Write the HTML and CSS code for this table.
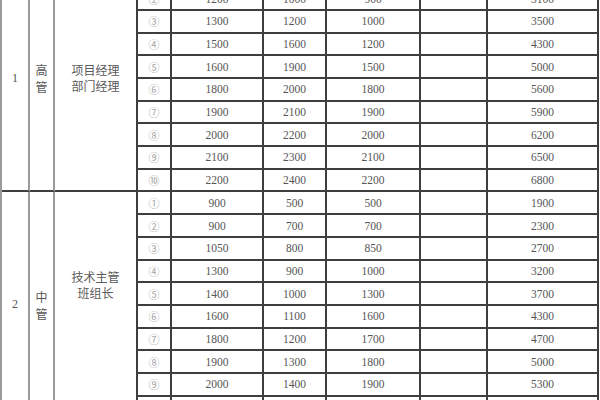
FILE: index.html
```html
<!DOCTYPE html>
<html lang="zh">
<head>
<meta charset="utf-8">
<title>薪资等级表</title>
<link rel="stylesheet" href="styles.css">
</head>
<body>
<div class="sheet">
  <div class="grp-no g1">1</div>
  <div class="grp-lv g1">高<br>管</div>
  <div class="grp-title g1">项目经理<br>部门经理</div>
  <div class="c">①</div><div class="n">1100</div><div class="n">1400</div><div class="n">800</div><div class="n"></div><div class="n">3300</div>
  <div class="c">②</div><div class="n">1200</div><div class="n">1000</div><div class="n">900</div><div class="n"></div><div class="n">3100</div>
  <div class="c">③</div><div class="n">1300</div><div class="n">1200</div><div class="n">1000</div><div class="n"></div><div class="n">3500</div>
  <div class="c">④</div><div class="n">1500</div><div class="n">1600</div><div class="n">1200</div><div class="n"></div><div class="n">4300</div>
  <div class="c">⑤</div><div class="n">1600</div><div class="n">1900</div><div class="n">1500</div><div class="n"></div><div class="n">5000</div>
  <div class="c">⑥</div><div class="n">1800</div><div class="n">2000</div><div class="n">1800</div><div class="n"></div><div class="n">5600</div>
  <div class="c">⑦</div><div class="n">1900</div><div class="n">2100</div><div class="n">1900</div><div class="n"></div><div class="n">5900</div>
  <div class="c">⑧</div><div class="n">2000</div><div class="n">2200</div><div class="n">2000</div><div class="n"></div><div class="n">6200</div>
  <div class="c">⑨</div><div class="n">2100</div><div class="n">2300</div><div class="n">2100</div><div class="n"></div><div class="n">6500</div>
  <div class="c">⑩</div><div class="n">2200</div><div class="n">2400</div><div class="n">2200</div><div class="n"></div><div class="n">6800</div>

  <div class="grp-no g2">2</div>
  <div class="grp-lv g2">中<br>管</div>
  <div class="grp-title g2 raised">技术主管<br>班组长</div>
  <div class="c">①</div><div class="n">900</div><div class="n">500</div><div class="n">500</div><div class="n"></div><div class="n">1900</div>
  <div class="c">②</div><div class="n">900</div><div class="n">700</div><div class="n">700</div><div class="n"></div><div class="n">2300</div>
  <div class="c">③</div><div class="n">1050</div><div class="n">800</div><div class="n">850</div><div class="n"></div><div class="n">2700</div>
  <div class="c">④</div><div class="n">1300</div><div class="n">900</div><div class="n">1000</div><div class="n"></div><div class="n">3200</div>
  <div class="c">⑤</div><div class="n">1400</div><div class="n">1000</div><div class="n">1300</div><div class="n"></div><div class="n">3700</div>
  <div class="c">⑥</div><div class="n">1600</div><div class="n">1100</div><div class="n">1600</div><div class="n"></div><div class="n">4300</div>
  <div class="c">⑦</div><div class="n">1800</div><div class="n">1200</div><div class="n">1700</div><div class="n"></div><div class="n">4700</div>
  <div class="c">⑧</div><div class="n">1900</div><div class="n">1300</div><div class="n">1800</div><div class="n"></div><div class="n">5000</div>
  <div class="c">⑨</div><div class="n">2000</div><div class="n">1400</div><div class="n">1900</div><div class="n"></div><div class="n">5300</div>
  <div class="c">⑩</div><div class="n">2100</div><div class="n">1500</div><div class="n">2000</div><div class="n"></div><div class="n">5600</div>
</div>
</body>
</html>
```
FILE: styles.css
```css
html, body {
  margin: 0;
  padding: 0;
  background: #ffffff;
  overflow: hidden;
}

.sheet {
  margin-top: -34.4px;
  width: 599px;
  display: grid;
  grid-template-columns: 28px 25px 83px 34px 92px 63px 94px 67px 111px;
  grid-auto-rows: 22.7px;
  border-left: 2px solid #9a9a9a;
  font-family: "Liberation Serif", "Noto Sans CJK SC", serif;
  color: #555;
}

.sheet > div {
  box-sizing: border-box;
  display: flex;
  align-items: center;
  justify-content: center;
  text-align: center;
  border-right: 2px solid #3e3e3e;
  border-bottom: 2px solid #3e3e3e;
}

.grp-no, .grp-lv, .grp-title {
  grid-row: span 10;
  grid-column: auto;
  font-size: 12px;
  line-height: 17px;
}

.grp-no {
  grid-column: 1;
  border-right-color: #9a9a9a !important;
}

.grp-lv {
  grid-column: 2;
  font-family: "Noto Sans CJK SC", sans-serif;
  border-right-color: #9a9a9a !important;
}

.grp-title {
  grid-column: 3;
  font-family: "Noto Sans CJK SC", sans-serif;
  line-height: 16px;
  color: #5a5a5a;
}

.raised {
  padding-bottom: 40px;
}

.c {
  grid-column: 4;
  font-family: "Noto Sans CJK SC", sans-serif;
  font-size: 11px;
  color: #a5a5a5;
}

.n {
  font-size: 11.5px;
  color: #555;
}
```
